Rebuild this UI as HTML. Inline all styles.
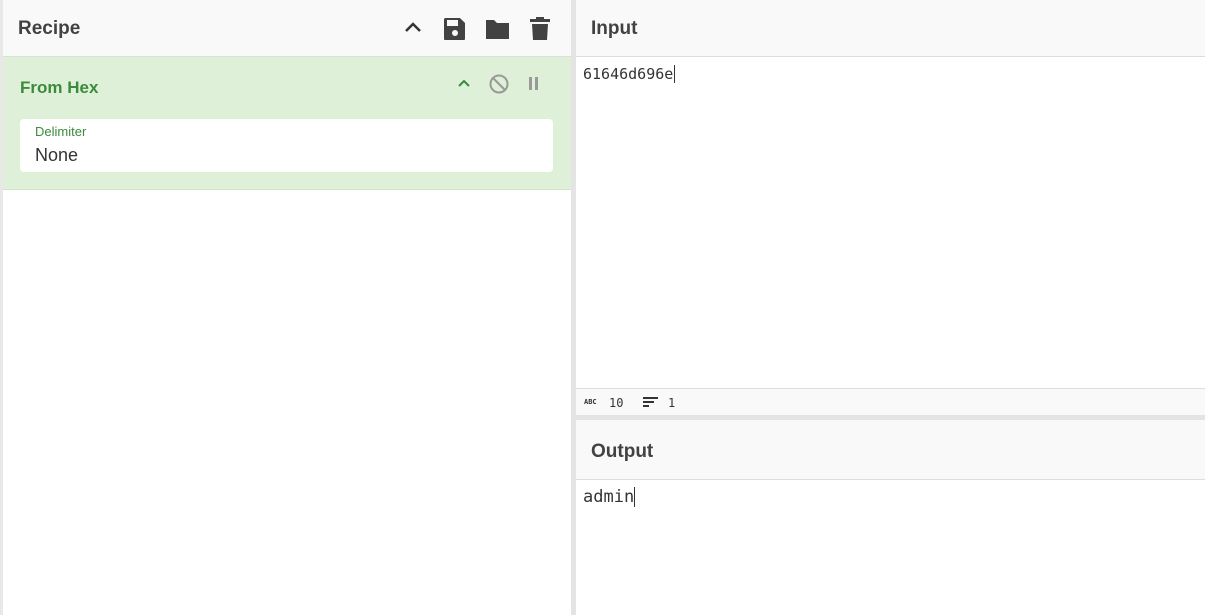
<!DOCTYPE html><html><head><style>
body{margin:0;width:1205px;height:615px;position:relative;overflow:hidden;font-family:"Liberation Sans",sans-serif;background:#fff}
.a{position:absolute}
.hd{background:#f9f9f9;border-bottom:1px solid #ddd;font-weight:bold;font-size:19px;color:#424242;box-sizing:border-box}
.mono{font-family:"DejaVu Sans Mono","Liberation Mono",monospace;color:#333}
</style></head><body>
<div class="a" style="left:0;top:0;width:3px;height:615px;background:#e8e8e8"></div>
<div class="a hd" style="left:3px;top:0;width:568px;height:57px;padding:18px 0 0 15px">Recipe</div>
<svg class="a" style="left:402px;top:16px" width="150" height="26">
<path d="M4 15 L11 8 L18 15" stroke="#333" stroke-width="2.5" fill="none"/>
<path d="M43 2h15l5 5v16a1 1 0 0 1-1 1h-19a1 1 0 0 1-1-1V3z" fill="#424242"/><rect x="45" y="4" width="11" height="6" fill="#f9f9f9"/><circle cx="53" cy="17" r="3" fill="#f9f9f9"/>
<path d="M84 4h8l3 3h12v16h-23z" fill="#424242"/>
<rect x="128" y="3" width="20" height="3" fill="#424242"/><rect x="134" y="1" width="8" height="3" fill="#424242"/><path d="M130 8h16l-1 16h-14z" fill="#424242"/>
</svg>
<div class="a" style="left:3px;top:57px;width:568px;height:132px;background:#dff0d8;border-bottom:1px solid #d0e4c8"></div>
<div class="a" style="left:20px;top:78px;font-weight:bold;font-size:17px;color:#3c8a3c">From Hex</div>
<svg class="a" style="left:455px;top:72px" width="90" height="24">
<path d="M4 14 L9 9 L14 14" stroke="#3c8a3c" stroke-width="2" fill="none"/>
<circle cx="44" cy="12" r="8.5" stroke="#999" stroke-width="2" fill="none"/><path d="M38 6 L50 18" stroke="#999" stroke-width="2"/>
<rect x="74" y="5" width="3" height="13" fill="#999"/><rect x="80" y="5" width="3" height="13" fill="#999"/>
</svg>
<div class="a" style="left:20px;top:119px;width:533px;height:53px;background:#fff;border-radius:4px"></div>
<div class="a" style="left:35px;top:124px;font-size:13px;color:#3c8a3c">Delimiter</div>
<div class="a" style="left:35px;top:145px;font-size:18px;color:#333">None</div>
<div class="a" style="left:571px;top:0;width:5px;height:615px;background:#e4e4e4"></div>
<div class="a hd" style="left:576px;top:0;width:629px;height:57px;padding:18px 0 0 15px">Input</div>
<div class="a mono" style="left:583px;top:65px;font-size:15px">61646d696e<span style="border-left:1px solid #333;margin-left:1px"></span></div>
<div class="a" style="left:576px;top:388px;width:629px;height:27px;background:#f9f9f9;border-top:1px solid #ddd;box-sizing:border-box"></div>
<div class="a mono" style="left:584px;top:398px;font-size:7px;font-weight:bold">ABC</div>
<div class="a mono" style="left:609px;top:396px;font-size:12px">10</div>
<svg class="a" style="left:643px;top:396px" width="16" height="12"><rect x="0" y="1" width="15" height="2" fill="#333"/><rect x="0" y="5" width="11" height="2" fill="#333"/><rect x="0" y="9" width="6" height="2" fill="#333"/></svg>
<div class="a mono" style="left:668px;top:396px;font-size:12px">1</div>
<div class="a" style="left:576px;top:415px;width:629px;height:5px;background:#e4e4e4"></div>
<div class="a hd" style="left:576px;top:420px;width:629px;height:60px;padding:21px 0 0 15px">Output</div>
<div class="a mono" style="left:583px;top:487px;font-size:17px">admin<span style="border-left:1px solid #333"></span></div>
</body></html>
